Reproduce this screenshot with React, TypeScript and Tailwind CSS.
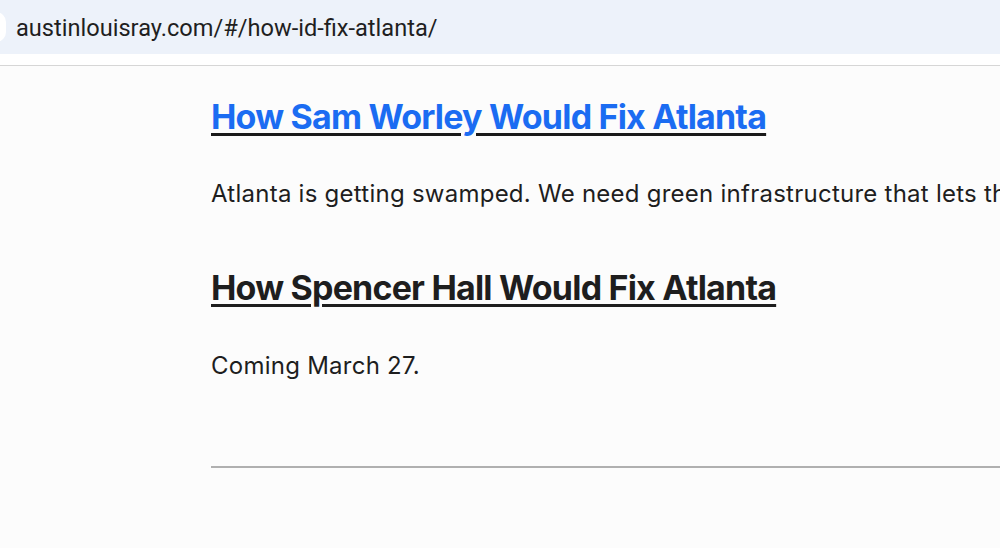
export default function App() {
  return (
    <div className="h-[548px] w-[1000px] overflow-hidden bg-[#fcfcfc]">
      {/* browser address bar */}
      <div className="h-[66px] bg-white border-b border-[#d6d6d6]">
        <div className="h-[54px] bg-[#edf2fa] flex items-center relative">
          <div className="absolute -left-[14px] top-[12px] w-[20px] h-[30px] rounded-full bg-white" />
          <span className="pl-[16px] pt-[3px] text-[23.6px] text-[#1f1f1f] font-['Roboto',sans-serif]">
            austinlouisray.com/#/how-id-fix-atlanta/
          </span>
        </div>
      </div>

      <div className="pl-[211px] font-['Inter',sans-serif] whitespace-nowrap">
        <h2 className="pt-[29px] text-[34px] leading-[44px] font-bold tracking-[-0.8px]">
          <a href="#" className="text-[#1b6cf2] underline decoration-[#1a1a1a] decoration-[3px] underline-offset-[4px]">
            How Sam Worley Would Fix Atlanta
          </a>
        </h2>
        <p className="mt-[38px] text-[24px] leading-[34px] text-[#1e1e1e] tracking-[0.25px]">
          Atlanta is getting swamped. We need green infrastructure that lets the water soak in.
        </p>
        <h2 className="mt-[55px] text-[34px] leading-[44px] font-bold tracking-[-0.8px] text-[#1e1e1e] underline decoration-[3px] underline-offset-[4px]">
          How Spencer Hall Would Fix Atlanta
        </h2>
        <p className="mt-[39px] text-[24px] leading-[34px] text-[#1e1e1e] tracking-[0.25px]">
          Coming March 27.
        </p>
        <hr className="mt-[83px] border-t-2 border-[#b0b0b0]" />
      </div>
    </div>
  );
}
